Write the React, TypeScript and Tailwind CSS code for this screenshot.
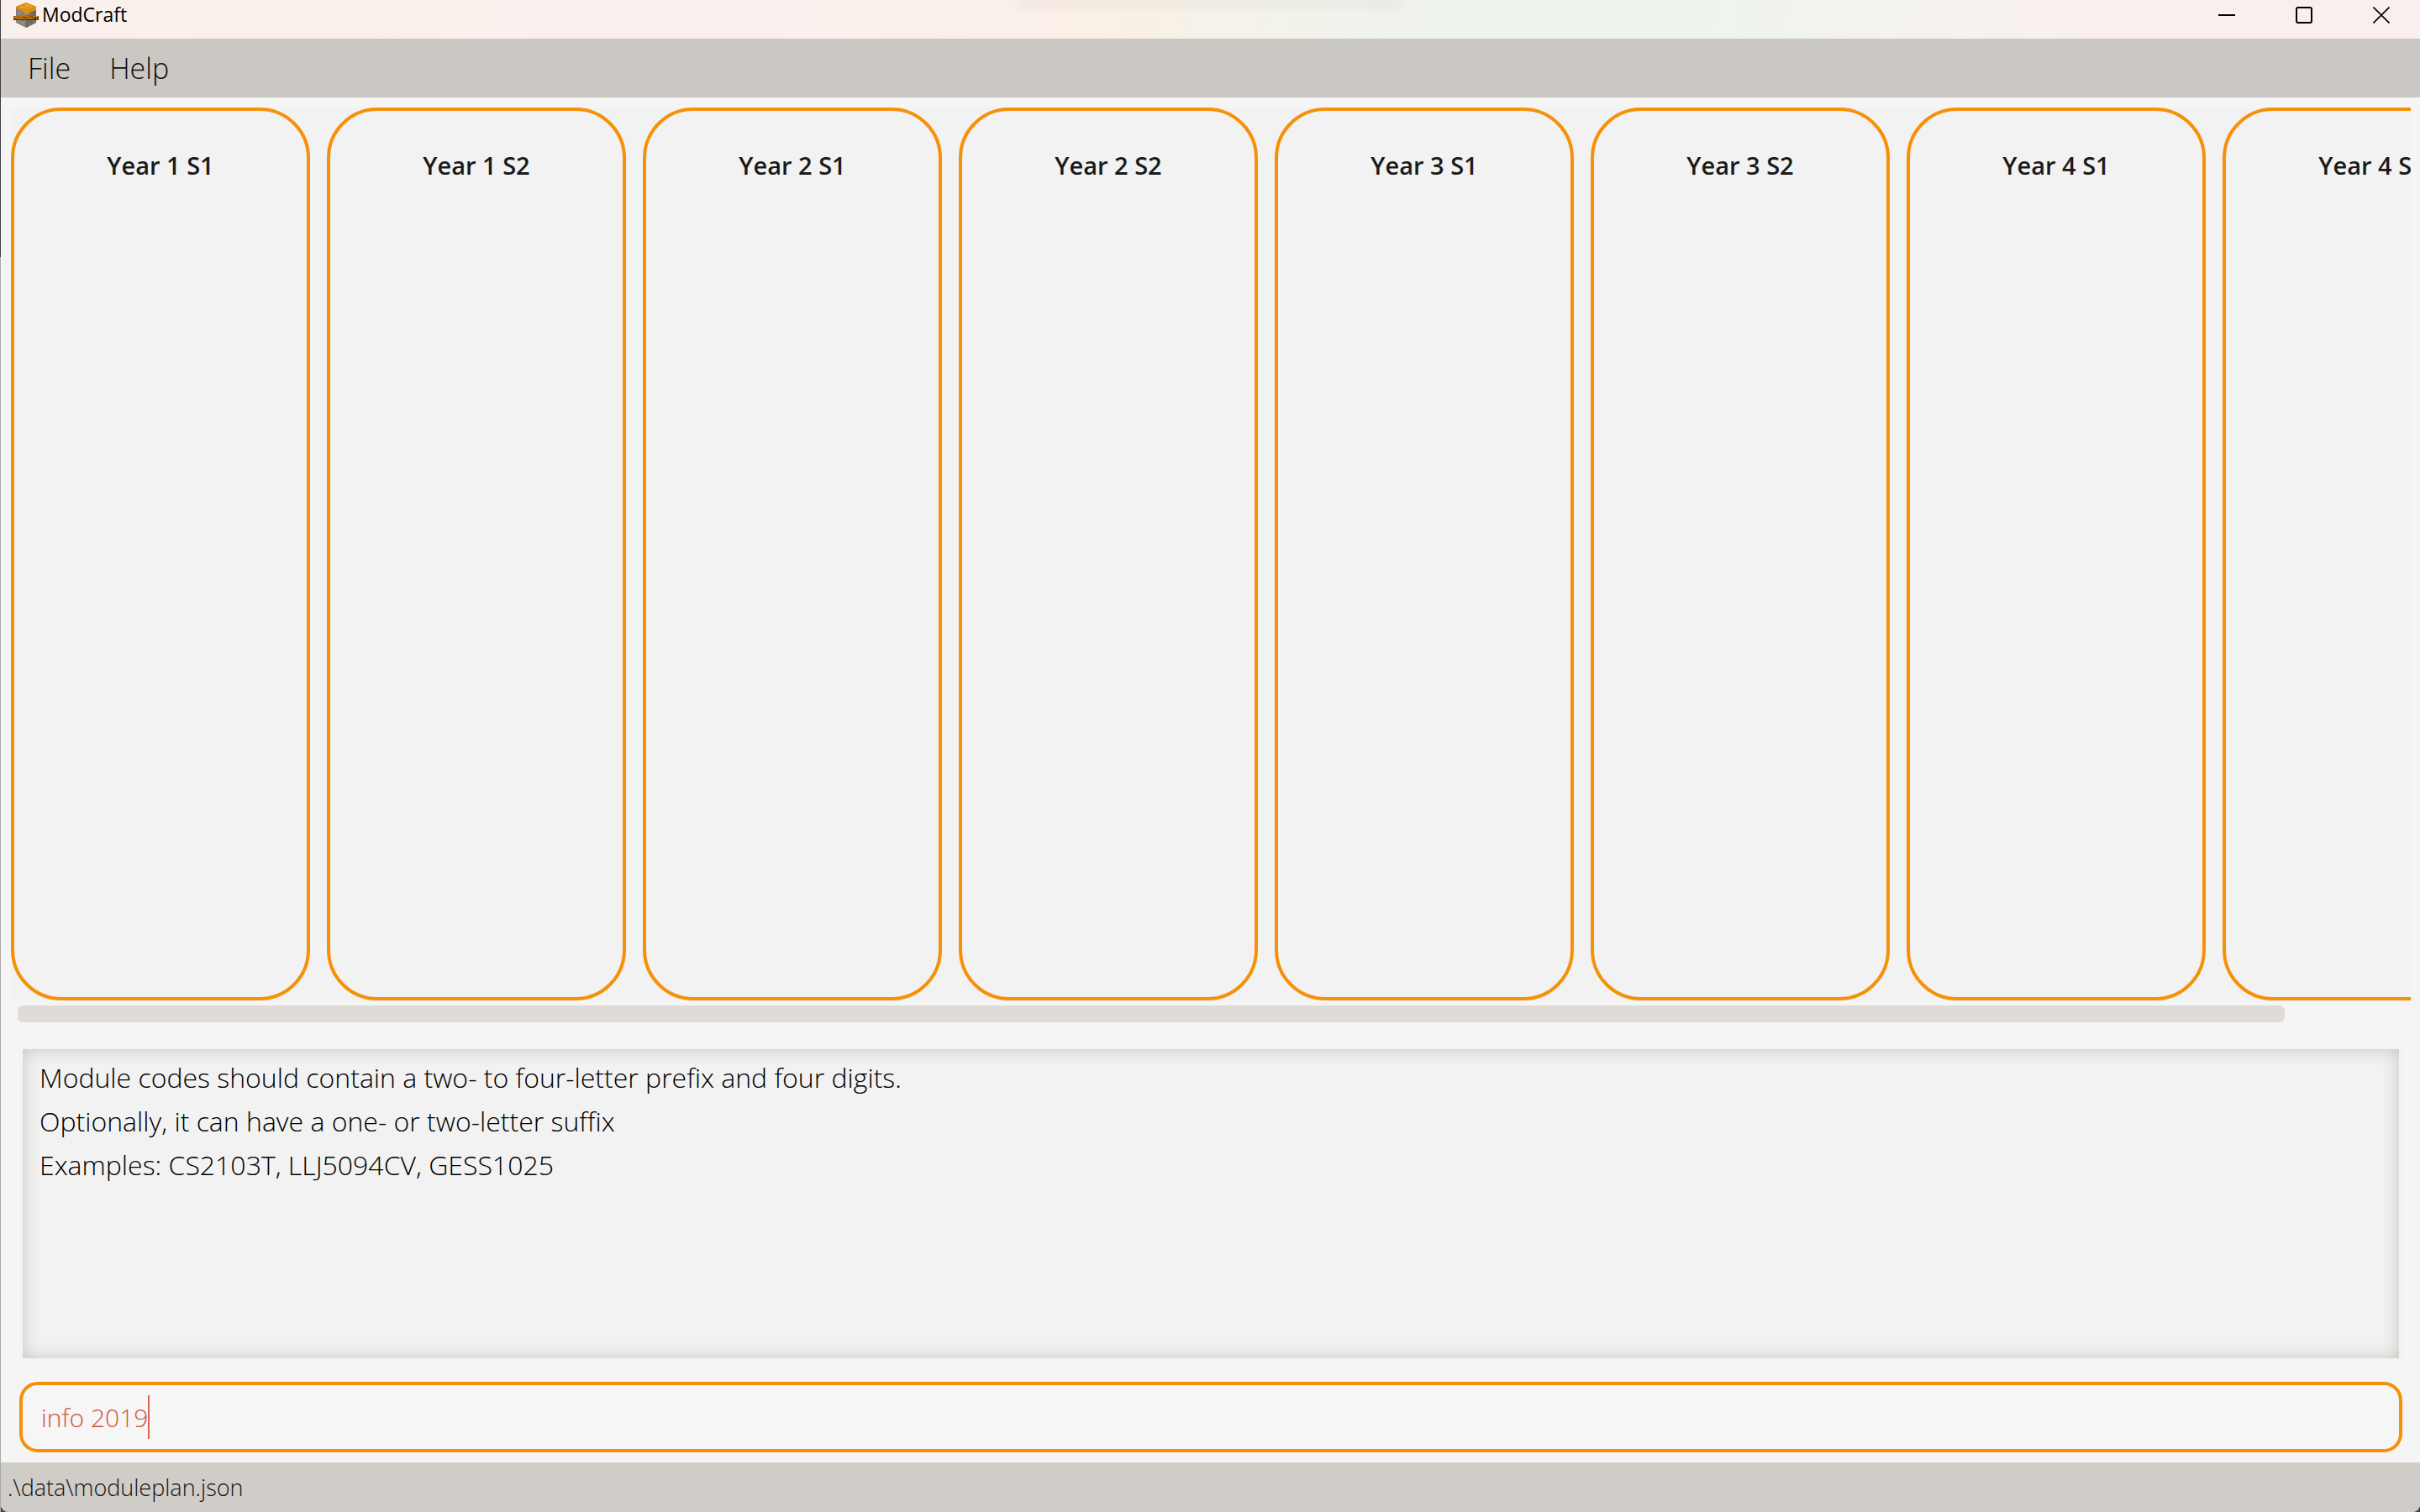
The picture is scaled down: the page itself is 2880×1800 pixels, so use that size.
import React from "react";

const semesters = [
  "Year 1 S1",
  "Year 1 S2",
  "Year 2 S1",
  "Year 2 S2",
  "Year 3 S1",
  "Year 3 S2",
  "Year 4 S1",
  "Year 4 S2",
];

const feedback = `Module codes should contain a two- to four-letter prefix and four digits.
Optionally, it can have a one- or two-letter suffix
Examples: CS2103T, LLJ5094CV, GESS1025`;

function CubeLogo() {
  return (
    <svg viewBox="0 0 30 30" className="h-[30px] w-[30px]" aria-hidden="true">
      <path d="M15 0 27 5v19l-12 6L3 24V5z" fill="#858079" />
      <path d="M15 10 27 5v19l-12 6z" fill="#6f6962" />
      <path d="M5 12h3v2H5zM9 23h3v2H9zM5 21h2v2H5zM11 26h2v1h-2z" fill="#9a948c" />
      <path d="M18 25h3v2h-3zM23 22h2v2h-2zM17 13h3v2h-3z" fill="#857c73" />
      <path d="M15 0 27 5v4l-3 1-2 1-3 1-1 2-3 1-2-3-3-2-3-1-4-2V5z" fill="#dd8d16" />
      <path d="M15 1 24 5l-9 3-9-3z" fill="#f0a22a" />
      <path d="M10 3h4v1h-4zM16 5h4v1h-4zM12 6h3v1h-3z" fill="#c97c10" />
      <path d="M0 16h30v5H0z" fill="#4a3216" />
      <text
        x="15"
        y="20"
        textAnchor="middle"
        className="fill-[#f1900f] font-['Liberation_Mono'] text-[6px] font-bold"
      >
        MODCRAFT
      </text>
    </svg>
  );
}

function TitleBar() {
  const button = "flex w-[92px] items-center justify-center";
  return (
    <header className="relative flex h-[46px] shrink-0 items-stretch justify-between bg-[linear-gradient(90deg,#f9f0ed_0%,#faf0ea_14%,#f9efee_26%,#faf0ea_42%,#f9f0e5_47%,#f5f2ea_50%,#eff3ec_58%,#eef4ed_70%,#f5f2ed_80%,#f9f0ee_86%,#f9f0ee_100%)] pb-[11px]">
      <div className="absolute top-0 left-[42%] h-[14px] w-[16%] bg-linear-to-b from-black/5 to-transparent blur-xs" />
      <div className="flex items-center gap-1 pl-[15px]">
        <CubeLogo />
        <h1 className="font-['Open_Sans',sans-serif] text-[23px] font-normal text-black">ModCraft</h1>
      </div>
      <div className="flex">
        <button type="button" aria-label="Minimize" className={button}>
          <svg viewBox="0 0 20 20" className="h-5 w-5" fill="none" stroke="#000" strokeWidth="2">
            <path d="M0 10h20" />
          </svg>
        </button>
        <button type="button" aria-label="Maximize" className={button}>
          <svg viewBox="0 0 20 20" className="h-5 w-5" fill="none" stroke="#000" strokeWidth="2">
            <rect x="1" y="1" width="18" height="18" rx="2" />
          </svg>
        </button>
        <button type="button" aria-label="Close" className={button}>
          <svg viewBox="0 0 20 20" className="h-5 w-5" fill="none" stroke="#000" strokeWidth="1.6">
            <path d="M.5.5l19 19M19.5.5l-19 19" />
          </svg>
        </button>
      </div>
    </header>
  );
}

function MenuBar() {
  return (
    <nav className="flex h-[70px] shrink-0 items-center bg-[#cbc7c2] pl-[9px] text-[34px] text-[#111]">
      {["File", "Help"].map((item) => (
        <button key={item} type="button" className="h-full px-[23px]">
          {item}
        </button>
      ))}
    </nav>
  );
}

function SemesterBoard() {
  return (
    <section aria-label="Module plan" className="flex min-h-0 flex-1 flex-col pt-3 pr-[11px] pb-[14px] pl-3">
      <div className="flex min-h-0 flex-1 gap-5 overflow-x-auto bg-[#f2f2f2] [scrollbar-width:none]">
        {semesters.map((name) => (
          <article
            key={name}
            className="w-[356px] shrink-0 rounded-[60px] border-4 border-[#f79009] bg-[#f2f2f2] pt-[45px]"
          >
            <h2 className="text-center text-[29px] leading-10 font-semibold text-[#1a1a1a]">{name}</h2>
          </article>
        ))}
      </div>
      <div className="mt-[6px] px-2">
        <div className="h-5 w-[95%] rounded-[6px] bg-[#dfdbd8]" />
      </div>
    </section>
  );
}

export default function App() {
  return (
    <div className="flex h-screen bg-[#4a4a4a] font-['Open_Sans','Noto_Sans',sans-serif] font-light">
      <div className="w-px shrink-0 bg-[linear-gradient(#3f3f44_17%,#aaaaaa_17%)]" />
      <div className="flex min-w-0 flex-1 flex-col overflow-hidden rounded-b-[9px] bg-[#f5f5f5]">
        <TitleBar />
        <MenuBar />
        <SemesterBoard />
        <section className="border-t-4 border-[#f4f4f4] py-[10px] pr-[21px] pl-[22px]">
          <textarea
            readOnly
            aria-label="Result"
            value={feedback}
            className="block h-[376px] w-full resize-none border-4 border-[#f3f3f3] bg-[#f2f2f2] px-5 pt-2 text-[32px] leading-[52px] text-black shadow-[inset_0_0_20px_#c5c3bd] outline-none"
          />
        </section>
        <section className="border-t-4 border-[#f4f4f4] pt-[10px] pr-[21px] pb-3 pl-[22px]">
          <label className="flex h-[84px] cursor-text items-center rounded-[22px] border-4 border-[#f79009] bg-[#f6f6f6] pl-[22px]">
            <input
              aria-label="Command"
              defaultValue="info 2019"
              className="field-sizing-content bg-transparent text-[30px] text-[#d0523c] caret-transparent outline-none"
            />
            <span className="h-[52px] w-[2px] bg-[#d4664f]" />
          </label>
        </section>
        <footer className="flex h-[59px] shrink-0 items-center bg-[#d0cdc8] pt-[2px] pl-2 text-[27px] text-[#111]">
          {".\\data\\moduleplan.json"}
        </footer>
      </div>
    </div>
  );
}
